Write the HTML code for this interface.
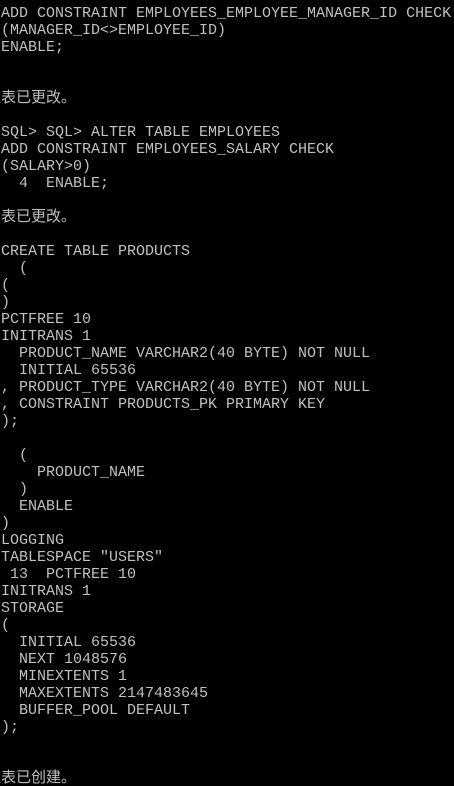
<!DOCTYPE html>
<html><head><meta charset="utf-8"><style>
html,body{margin:0;padding:0;background:#000;width:454px;height:786px;overflow:hidden}
pre{margin:0;padding:5px 0 0 1px;color:#c0c0c0;font-family:"Liberation Mono","Noto Sans CJK SC",monospace;font-size:15px;line-height:17px;white-space:pre}
</style></head><body><pre>ADD CONSTRAINT EMPLOYEES_EMPLOYEE_MANAGER_ID CHECK
(MANAGER_ID&lt;&gt;EMPLOYEE_ID)
ENABLE;


表已更改。

SQL&gt; SQL&gt; ALTER TABLE EMPLOYEES
ADD CONSTRAINT EMPLOYEES_SALARY CHECK
(SALARY&gt;0)
  4  ENABLE;

表已更改。

CREATE TABLE PRODUCTS
  (
(
)
PCTFREE 10
INITRANS 1
  PRODUCT_NAME VARCHAR2(40 BYTE) NOT NULL
  INITIAL 65536
, PRODUCT_TYPE VARCHAR2(40 BYTE) NOT NULL
, CONSTRAINT PRODUCTS_PK PRIMARY KEY
);

  (
    PRODUCT_NAME
  )
  ENABLE
)
LOGGING
TABLESPACE "USERS"
 13  PCTFREE 10
INITRANS 1
STORAGE
(
  INITIAL 65536
  NEXT 1048576
  MINEXTENTS 1
  MAXEXTENTS 2147483645
  BUFFER_POOL DEFAULT
);


表已创建。</pre></body></html>
